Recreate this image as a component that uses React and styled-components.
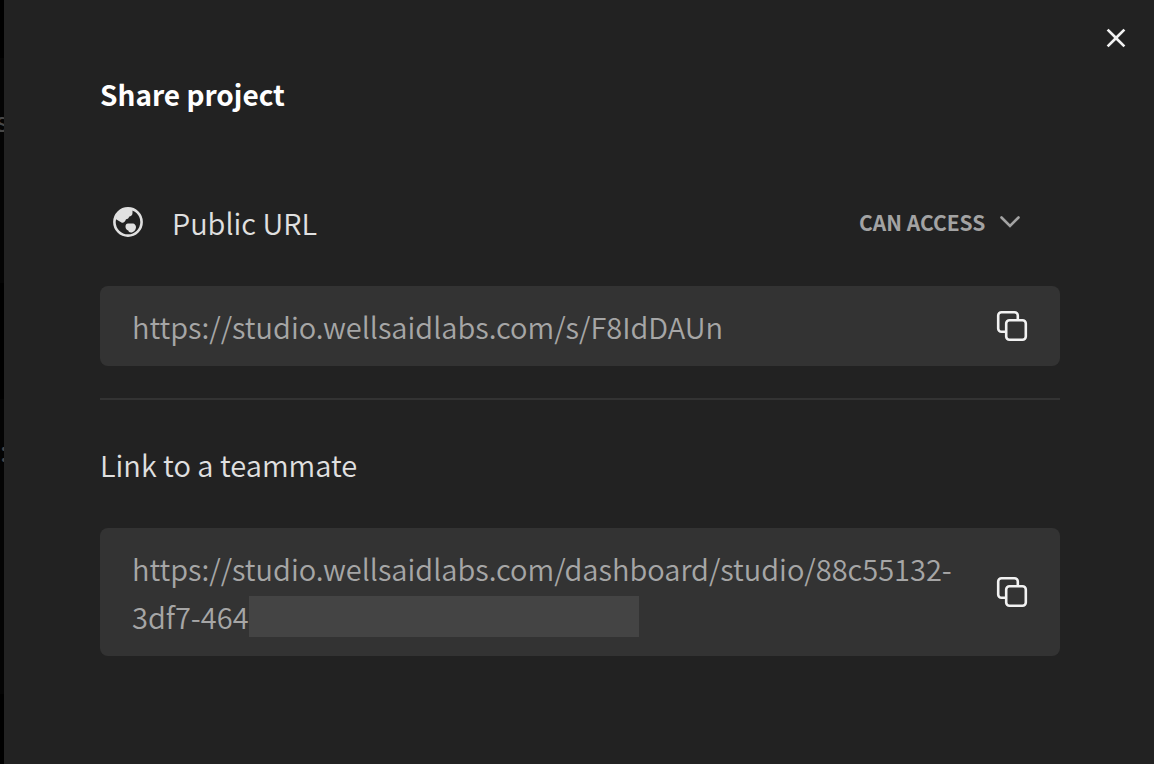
import React, { useState } from 'react'
import styled, { createGlobalStyle } from 'styled-components'
import { MdClose } from 'react-icons/md'

const GlobalStyle = createGlobalStyle`
  * {
    box-sizing: border-box;
  }
  body {
    margin: 0;
    background-color: #222222;
    font-family: 'Noto Sans CJK SC', 'Noto Sans', sans-serif;
  }
`
const Page = styled.div`
  display: flex;
  min-height: 100vh;
`
const Backdrop = styled.div`
  display: flex;
  flex-direction: column;
  width: 4px;
  overflow: hidden;
  background-color: #000000;
`
const BackdropBlock = styled.div`
  display: flex;
  justify-content: ${props => props.$align || 'center'};
  flex: 0 0 ${props => props.$height}px;
  padding-top: ${props => props.$top || 0}px;
  background-color: ${props => props.$lit ? '#040404' : '#000000'};
  color: #484848;
  font-size: 28px;
  line-height: 24px;
`
const Dialog = styled.main`
  flex: 1;
  min-width: 0;
  background-color: #222222;
`
const TopBar = styled.div`
  display: flex;
  justify-content: flex-end;
  padding: 22px 22px 0 0;
`
const IconButton = styled.button`
  display: flex;
  flex-shrink: 0;
  padding: 0;
  border: none;
  background: none;
  color: #f2f2f2;
  cursor: pointer;
`
const Content = styled.div`
  padding: 16px 94px 108px 96px;
`
const Title = styled.h1`
  margin: 0;
  color: #ffffff;
  font-size: 28px;
  font-weight: bold;
  line-height: 48px;
`
const AccessRow = styled.div`
  display: flex;
  align-items: center;
  justify-content: space-between;
  margin-top: 80px;
  padding: 0 40px 0 12px;
`
const AccessLabel = styled.label`
  display: flex;
  align-items: center;
  gap: 28px;
  color: #e0e0e0;
  font-size: 29px;
  font-weight: 350;
  line-height: 48px;
`
const SelectBox = styled.div`
  display: flex;
  align-items: center;
  gap: 14px;
  color: #a3a3a3;
`
const Select = styled.select`
  appearance: none;
  padding: 0;
  border: none;
  background: none;
  color: inherit;
  font-family: inherit;
  font-size: 21px;
  font-weight: bold;
  line-height: 32px;
`
const UrlBox = styled.div`
  display: flex;
  align-items: center;
  justify-content: space-between;
  gap: 24px;
  margin-top: 40px;
  padding: 16px 32px;
  border-radius: 8px;
  background-color: #333333;
`
const UrlLink = styled.a`
  min-width: 0;
  color: #a6a6a6;
  font-size: 29px;
  font-weight: 350;
  line-height: 48px;
  text-decoration: none;
`
const Redacted = styled.span`
  display: inline-block;
  width: 390px;
  height: 41px;
  margin-top: 4px;
  background-color: #444444;
  vertical-align: top;
`
const Divider = styled.hr`
  height: 2px;
  margin: 32px 0 0;
  border: none;
  background-color: #333333;
`
const SubTitle = styled.h2`
  margin: 40px 0 0;
  color: #e0e0e0;
  font-size: 29px;
  font-weight: 350;
  line-height: 48px;
`

const GlobeIcon = () => (
  <svg width="32" height="32" viewBox="0 0 32 32" aria-hidden="true">
    <circle cx="16" cy="16" r="13.6" fill="none" stroke="#e0e0e0" strokeWidth="2.6" />
    <path
      d="M3 13 C4 7 9 2.500 16 2.500 C18 2.500 19.500 3 20.500 4 V7 C20.500 9 19 10.500 17 10.800 C17 12.500 15.500 13 14 13.300 C13.500 15.500 11 17.500 9.500 16.500 L3.500 13 Z"
      fill="#e0e0e0"
    />
    <path
      d="M16 17.500 H21 C22.500 17.500 24 19.500 24 21 C24 24 21.500 26.500 19 26.500 C17.300 26.500 16.500 25.500 16.300 24.500 C14.500 24 13.500 22.500 13.500 20.500 C13.500 18.800 14.500 17.500 16 17.500 Z"
      fill="#e0e0e0"
    />
  </svg>
)

const ChevronIcon = () => (
  <svg width="20" height="12" viewBox="0 0 20 12" fill="none" aria-hidden="true">
    <path d="M1.500 1.500 L10 10 L18.500 1.500" stroke="currentColor" strokeWidth="2.600" strokeLinecap="round" />
  </svg>
)

const CopyIcon = () => (
  <svg width="32" height="32" viewBox="0 0 32 32" fill="none" stroke="currentColor" strokeWidth="2.600" aria-hidden="true">
    <rect x="10.200" y="10.200" width="19.600" height="19.600" rx="3.300" />
    <path d="M10 21.800 H5.500 A3.300 3.300 0 0 1 2.200 18.500 V5.500 A3.300 3.300 0 0 1 5.500 2.200 H18.500 A3.300 3.300 0 0 1 21.800 5.500 V10" />
  </svg>
)

const publicUrl = 'https://studio.wellsaidlabs.com/s/F8IdDAUn'
const teamUrl = 'https://studio.wellsaidlabs.com/dashboard/studio/88c55132-3df7-464'

const App = () => {
  const [access, setAccess] = useState('can')
  const copy = (url) => navigator.clipboard?.writeText(url)

  return (
    <Page>
      <GlobalStyle />
      <Backdrop aria-hidden="true">
        <BackdropBlock $height={58} />
        <BackdropBlock $height={225} $top={50} $lit>s</BackdropBlock>
        <BackdropBlock $height={116} />
        <BackdropBlock $height={295} $top={39} $align="flex-start" $lit>:</BackdropBlock>
      </Backdrop>
      <Dialog>
        <TopBar>
          <IconButton aria-label="Close">
            <MdClose size={32} />
          </IconButton>
        </TopBar>
        <Content>
          <Title>Share project</Title>
          <AccessRow>
            <AccessLabel htmlFor="access">
              <GlobeIcon />
              Public URL
            </AccessLabel>
            <SelectBox>
              <Select id="access" value={access} onChange={(e) => setAccess(e.target.value)}>
                <option value="can">CAN ACCESS</option>
                <option value="no">NO ACCESS</option>
              </Select>
              <ChevronIcon />
            </SelectBox>
          </AccessRow>
          <UrlBox>
            <UrlLink href={publicUrl}>{publicUrl}</UrlLink>
            <IconButton aria-label="Copy public URL" onClick={() => copy(publicUrl)}>
              <CopyIcon />
            </IconButton>
          </UrlBox>
          <Divider />
          <SubTitle>Link to a teammate</SubTitle>
          <UrlBox>
            <UrlLink href={teamUrl}>
              {teamUrl}<Redacted />
            </UrlLink>
            <IconButton aria-label="Copy teammate link" onClick={() => copy(teamUrl)}>
              <CopyIcon />
            </IconButton>
          </UrlBox>
        </Content>
      </Dialog>
    </Page>
  )
}

export default App
